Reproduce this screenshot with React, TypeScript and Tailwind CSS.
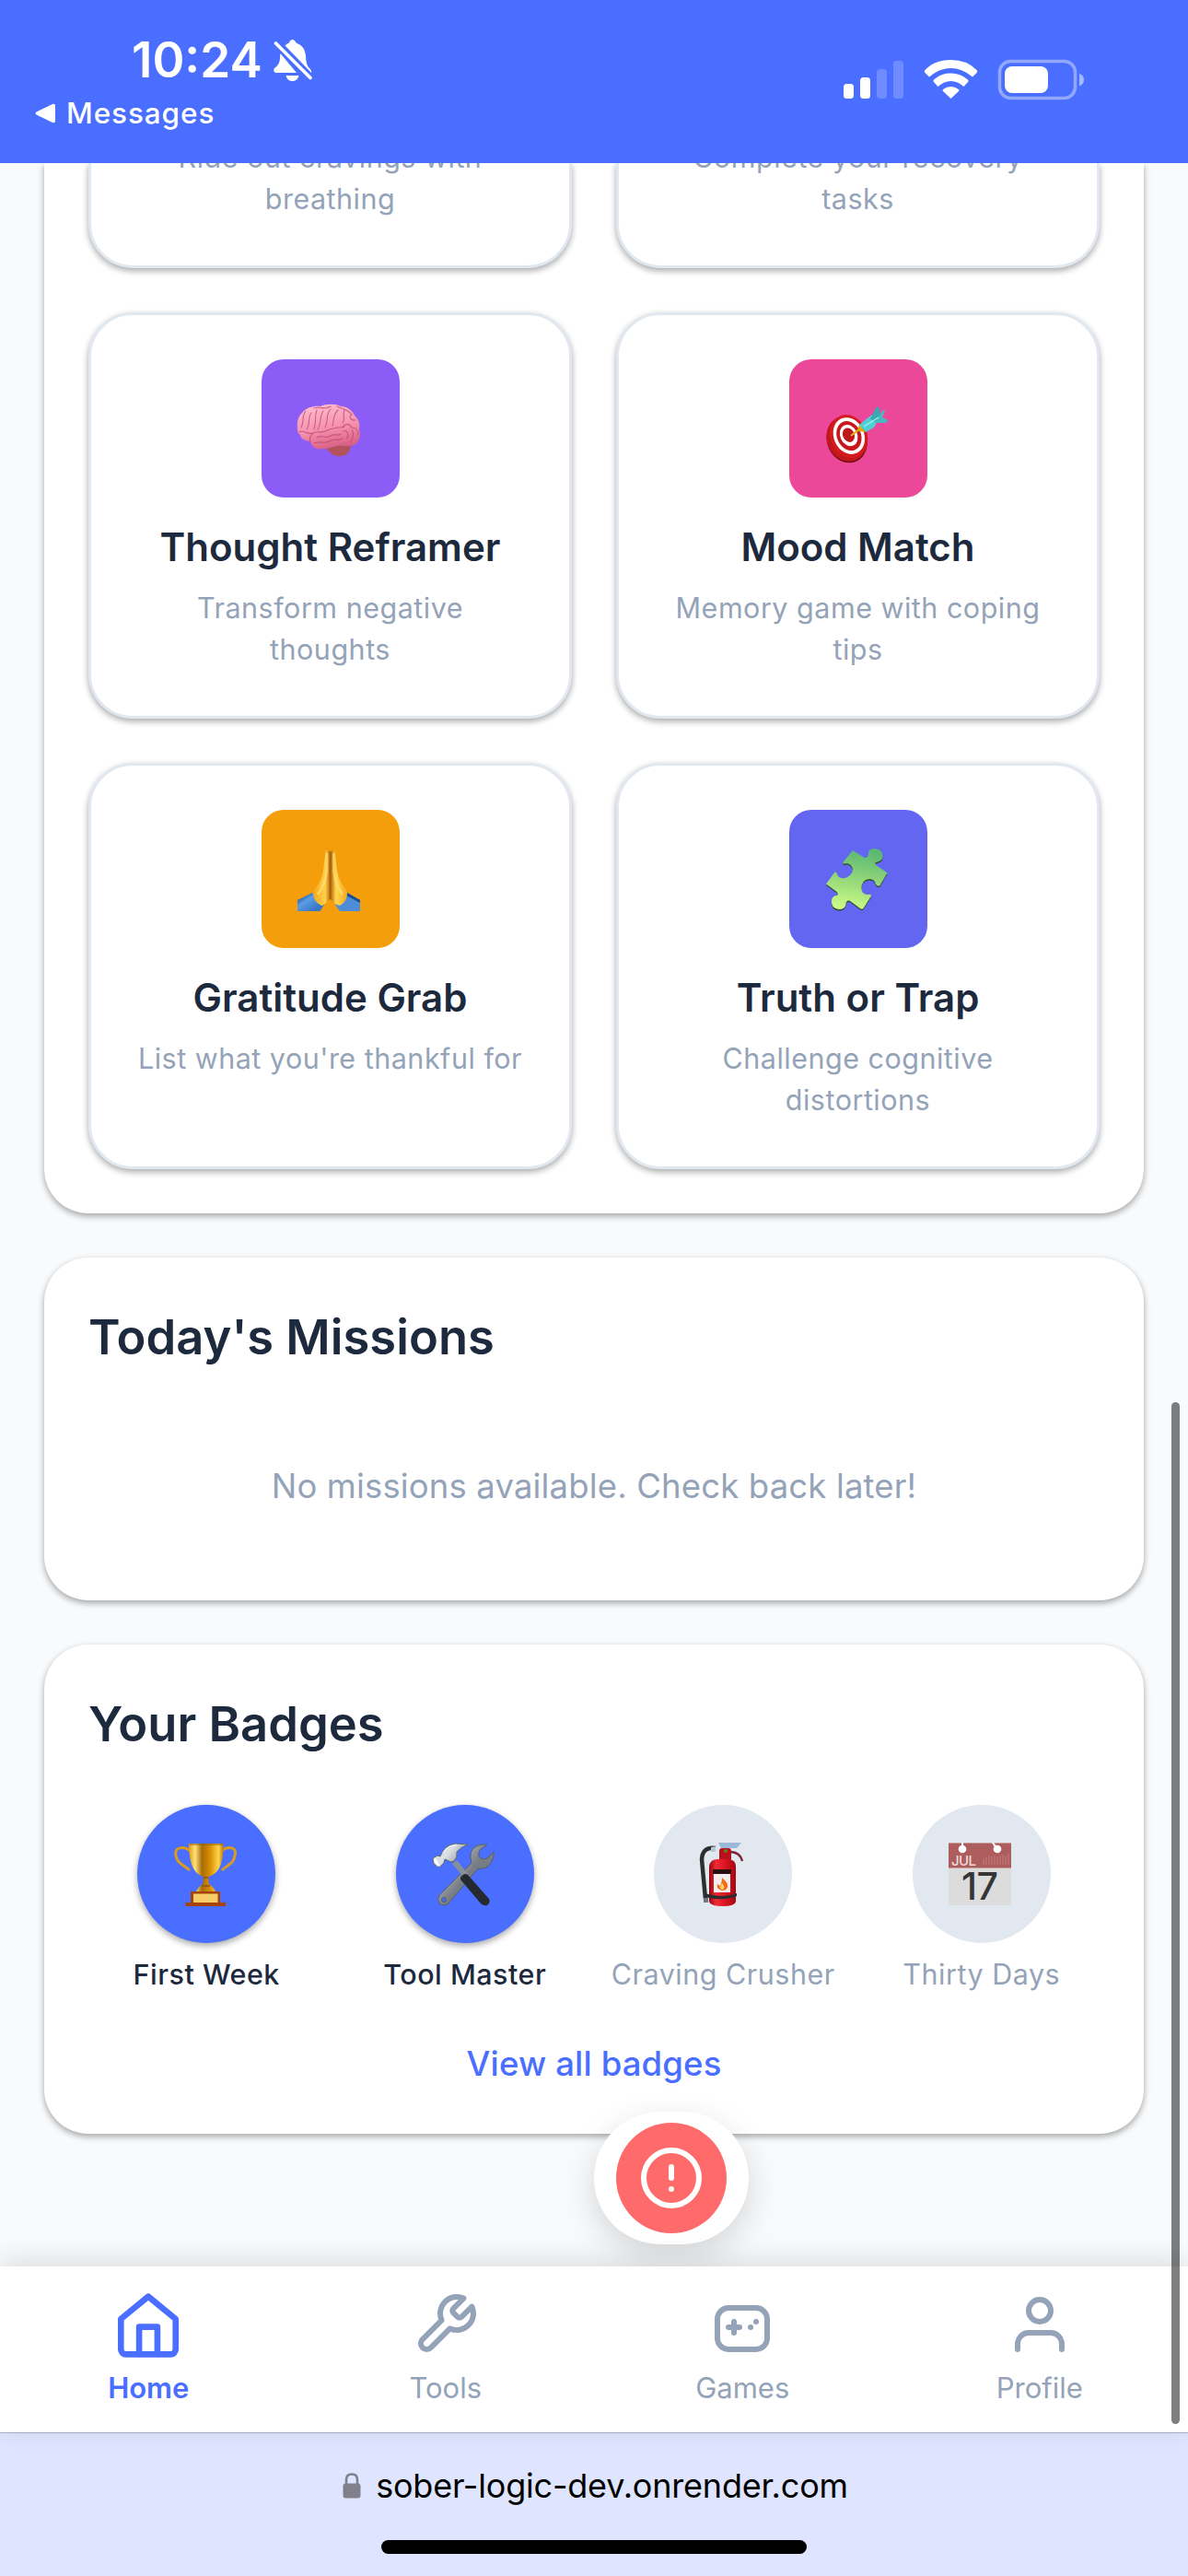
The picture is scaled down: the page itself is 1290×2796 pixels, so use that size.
import type { ReactNode } from "react";

const CARD_SHADOW = "shadow-[0_3px_9px_rgba(0,0,0,0.12),0_3px_6px_rgba(0,0,0,0.24)]";

function Emoji({ children }: { children: ReactNode }) {
  return (
    <svg viewBox="0 0 150 150" className="h-[150px] w-[150px]" fill="none">
      {children}
    </svg>
  );
}

function Brain() {
  return (
    <Emoji>
      <defs>
        <linearGradient id="brain" x1="70" y1="49" x2="80" y2="100" gradientUnits="userSpaceOnUse">
          <stop stopColor="#ffb9cb" />
          <stop offset="0.5" stopColor="#f590ae" />
          <stop offset="1" stopColor="#d3567d" />
        </linearGradient>
      </defs>
      <path d="M70 96C74 102 80 106 86 105C94 105 97 98 97 91Z" fill="#b4525b" />
      <path
        d="M39 76C38 68 40 61 45 57C49 52 58 50 64 51C70 48 81 48 86 51C93 51 99 56 101 61C106 66 107 70 106 76C108 83 106 91 100 93C94 96 86 92 82 94C75 95 72 98 66 97C59 99 54 94 53 89C48 89 42 86 42 82C40 81 39 79 39 76Z"
        fill="url(#brain)"
      />
      <g stroke="#bd4770" strokeWidth="1.1" strokeLinecap="round" opacity="0.75">
        <path d="M53 89C51 82 57 78 63 79C70 80 72 75 78 75C83 73 86 75 90 73" />
        <path d="M48 56C43 62 47 67 43 74M54 58C49 65 54 69 49 76M60 55C57 63 60 67 57 76M67 56C63 62 65 69 61 76M75 54C69 61 73 66 69 74M83 55C77 61 79 65 77 72M90 55C87 63 92 63 88 69" />
        <path d="M57 53C64 50 68 56 75 51M82 51C88 54 94 54 98 60C94 62 97 67 102 66" />
        <path d="M88 74C90 69 96 70 98 74C103 74 105 78 105 82M89 78C93 76 95 81 93 86M98 77C101 79 99 86 97 90" />
        <path d="M60 85C66 81 69 87 75 83C80 80 83 84 86 81M57 91C64 88 70 93 76 88C80 86 84 89 88 86M41 79C46 76 49 82 55 80" />
      </g>
    </Emoji>
  );
}

function Target() {
  return (
    <Emoji>
      <g transform="rotate(-24 63 85)">
        <ellipse cx="61.5" cy="87.5" rx="21.5" ry="25" fill="#6f1010" />
        <ellipse cx="62" cy="86" rx="21.5" ry="25" fill="#c3161c" />
        <ellipse cx="65" cy="84.5" rx="20" ry="24" fill="#d4191f" />
        <ellipse cx="65.5" cy="84" rx="16.5" ry="20.5" fill="#fff" />
        <ellipse cx="65.5" cy="84" rx="13" ry="16.5" fill="#c9151d" />
        <ellipse cx="65.5" cy="83.5" rx="9.3" ry="12" fill="#fff" />
        <ellipse cx="65.5" cy="83" rx="6.2" ry="8" fill="#bd171c" />
      </g>
      <path d="M67 83L77 75" stroke="#e5b719" strokeWidth="2" />
      <path d="M74 78L76 71L83 79Z" fill="#d9aa08" />
      <path d="M76 71L90 60L97 65L92 74L83 79Z" fill="#4fd0d7" />
      <path d="M88 65L94 53Q97 50 98 54L99 62L94 68Z" fill="#38a9b0" />
      <path d="M95 65L102 55L104 56L101 63L107 66Q107 69 103 69L93 69Z" fill="#47b9c2" />
      <path d="M81 73L97 63" stroke="#a5f2ef" strokeWidth="1.2" />
    </Emoji>
  );
}

function Hands() {
  return (
    <Emoji>
      <defs>
        <linearGradient id="skin" x1="56" x2="94" gradientUnits="userSpaceOnUse">
          <stop stopColor="#f5a81b" />
          <stop offset="0.35" stopColor="#ffd04a" />
          <stop offset="0.5" stopColor="#b86506" />
          <stop offset="0.65" stopColor="#ffd651" />
          <stop offset="1" stopColor="#f2a51a" />
        </linearGradient>
        <linearGradient id="sleeve" x1="40" y1="93" x2="52" y2="111" gradientUnits="userSpaceOnUse">
          <stop stopColor="#174f92" />
          <stop offset="0.45" stopColor="#5c9de6" />
          <stop offset="1" stopColor="#3a78c6" />
        </linearGradient>
      </defs>
      <path d="M39 98L55 90L68 103L63.5 110H39Z" fill="url(#sleeve)" />
      <path d="M107 98L93 90L80 103L85 110H107Z" fill="#4d8dd8" />
      <path d="M107 98L93 90L92 93L107 101Z" fill="#174f92" />
      <path
        d="M74.5 45Q70 42 69.5 45L67 66Q65 79 56 88Q55 99 65 104Q69 103 74.5 97Q80 103 85 104Q94 99 93 88Q84 79 82 66L79.5 45Q79 42 74.5 45Z"
        fill="url(#skin)"
      />
      <path d="M74.5 46V97" stroke="#a65d08" strokeWidth="1.4" />
      <path d="M71 47V66Q69 81 61 92M78.5 47V67Q80 81 88 92" stroke="#ffe07a" strokeWidth="2.5" opacity="0.7" />
    </Emoji>
  );
}

const PUZZLE_PATH =
  "M69 44L81 51.5Q85 53 86 49Q85 42 93 42Q102 43 101.500 51Q101 55 96 56.500Q91 57 95 60.500L106.500 68.500L98.500 82Q96.500 84 94 81Q93 75 87 75Q78 76 78.500 86Q79 92 86 92Q89 91 89 93.500L80.500 107Q79 108.500 77 107L65.500 98.500Q62 98 61.500 102Q61 108 54 108Q45 107 46 98Q47 93 52 93Q54 91 51 88.500L40 80.500L49.500 67.500Q51.500 67 52.500 71Q55 75 61 74Q69 71 69 64Q67 57 59 58.500Q57.500 58 60 55Z";

function Puzzle() {
  return (
    <Emoji>
      <defs>
        <linearGradient id="puzzle" x1="78" y1="44" x2="68" y2="108" gradientUnits="userSpaceOnUse">
          <stop stopColor="#5ab873" />
          <stop offset="0.55" stopColor="#99da7b" />
          <stop offset="1" stopColor="#ccfb87" />
        </linearGradient>
      </defs>
      <path d={PUZZLE_PATH} fill="#344b2f" transform="translate(0 1.5)" />
      <path d={PUZZLE_PATH} fill="url(#puzzle)" />
    </Emoji>
  );
}

function Trophy() {
  return (
    <Emoji>
      <defs>
        <linearGradient id="gold" x1="56" x2="94" gradientUnits="userSpaceOnUse">
          <stop stopColor="#e39a08" />
          <stop offset="0.18" stopColor="#ffe27a" />
          <stop offset="0.38" stopColor="#a86c08" />
          <stop offset="0.6" stopColor="#d98d00" />
          <stop offset="0.85" stopColor="#ffd44c" />
          <stop offset="1" stopColor="#b87206" />
        </linearGradient>
      </defs>
      <path
        d="M58 50C50 44 40 46 42 55C43 64 51 65 57 71M91 50C99 44 109 46 106 55C105 64 98 65 92 71"
        stroke="#d99a20"
        strokeWidth="3"
      />
      <path d="M56 42H93.500C94 60 90 75 77 78L78 86Q84 90 85 95H64Q65 90 71 86L72 78C60 75 56 60 56 42Z" fill="url(#gold)" />
      <path d="M72 79H77M70 88H79" stroke="#8e5706" strokeWidth="1.5" />
      <path d="M58 94H90V106H96V110H52.500V106H58Z" fill="#a64309" />
      <rect x="61" y="96.500" width="26.500" height="9.500" fill="#f6cd68" />
      <path d="M57 43H93" stroke="#8a5c05" strokeWidth="1.200" />
    </Emoji>
  );
}

function HammerWrench() {
  return (
    <Emoji>
      <defs>
        <linearGradient id="steel" x1="50" y1="60" x2="75" y2="80" gradientUnits="userSpaceOnUse">
          <stop stopColor="#dbe0e5" />
          <stop offset="0.5" stopColor="#9ba2aa" />
          <stop offset="1" stopColor="#777c85" />
        </linearGradient>
      </defs>
      <path
        d="M99 43Q90 42 84 47Q79 53 82 63L47 98Q44 103 47 107Q52 111 57 107L89 69Q98 71 103 63Q107 57 106 51L100 57Q94 61 90 56Q89 51 92 48Z"
        fill="url(#steel)"
        stroke="#565d69"
        strokeWidth="1"
      />
      <circle cx="52" cy="103" r="2.500" fill="#4a6eff" stroke="#555d68" />
      <path d="M61 64L66 60L78 75L74 79Z" fill="#878f99" />
      <path d="M70 79Q74 73 78 76L101 102Q103 106 99 109Q95 110 92 107L70 81Z" fill="#252a30" />
      <path
        d="M78 43Q70 46 66 51Q67 57 63 61L60 62L53 59L52 63L47 68L41 64L40 58L45 55L48 56Q52 44 64 42Z"
        fill="url(#steel)"
        stroke="#616974"
        strokeWidth="1"
      />
      <path d="M52 52Q56 44 66 44" stroke="#e8ecef" strokeWidth="1.500" />
      <path d="M42 59L46 66" stroke="#fff" strokeWidth="3" />
    </Emoji>
  );
}

function Extinguisher() {
  return (
    <Emoji>
      <defs>
        <linearGradient id="tank" x1="60" x2="90" gradientUnits="userSpaceOnUse">
          <stop stopColor="#95070e" />
          <stop offset="0.25" stopColor="#ef2b37" />
          <stop offset="0.6" stopColor="#d9141e" />
          <stop offset="1" stopColor="#a00510" />
        </linearGradient>
      </defs>
      <path d="M67 47Q53 45 52 59L56 102" stroke="#2b3031" strokeWidth="4.500" />
      <path d="M62 46L67 45V51H62Z" fill="#b8c8d6" />
      <path d="M70 41H95L90 47H73Z" fill="#9ab8d8" />
      <path d="M84 51Q94 52 96 61" stroke="#7a2634" strokeWidth="2.500" />
      <rect x="71" y="47" width="13" height="14" rx="3" fill="#b8111d" />
      <circle cx="78" cy="50" r="2" fill="#4e8c18" />
      <path d="M60 67Q61 59 69 59H82Q89 60 89 67V105Q88 110 75 110Q61 110 60 105Z" fill="url(#tank)" />
      <path d="M64 70H84V75H64Z" fill="#2a1010" />
      <path d="M65 75H83V95H65Z" fill="#f5eeee" />
      <path d="M74 79Q81 85 80 89Q79 93 74 93Q67 91 69 86L72 88Q74 84 74 79Z" fill="#f36c15" />
      <path d="M74 85Q78 89 75 92Q71 91 72 89Z" fill="#ffd36b" />
      <path d="M55 96Q75 102 90 96V99Q75 105 55 100Z" fill="#2c2c2e" />
      <path d="M54 101H59V106H54Z" fill="#6c7881" />
    </Emoji>
  );
}

function Calendar() {
  return (
    <Emoji>
      <rect x="39" y="41" width="68" height="68" fill="#dcdcdc" />
      <rect x="39" y="41.500" width="68" height="27" fill="#ad5d5d" />
      <g fill="#fff">
        <circle cx="54" cy="48" r="4.300" />
        <circle cx="92" cy="48" r="4.300" />
        <path d="M53 41H55V46H53ZM86 41H88L92 46L90 48Z" />
      </g>
      <path d="M77 58V65M80 57V65M83 56V65M86 56V65M89 55V65M92 56V65M95 55V65M98 54V65M101 55V65M104 53V65" stroke="#c98585" strokeWidth="0.800" />
      <text x="42" y="65.500" fontFamily="Inter, sans-serif" fontSize="15" fontWeight="500" fill="#eedada" textLength="27">
        JUL
      </text>
      <text x="53" y="103" fontFamily="Inter, sans-serif" fontSize="41" fontWeight="500" fill="#353535" textLength="40">
        17
      </text>
    </Emoji>
  );
}

type Tool = { title: string; lines: string[]; tile: string; icon: ReactNode };

const tools: Tool[] = [
  { title: "Thought Reframer", lines: ["Transform negative", "thoughts"], tile: "bg-[#8b5cf6]", icon: <Brain /> },
  { title: "Mood Match", lines: ["Memory game with coping", "tips"], tile: "bg-[#ec4899]", icon: <Target /> },
  { title: "Gratitude Grab", lines: ["List what you're thankful for"], tile: "bg-[#f59e0b]", icon: <Hands /> },
  { title: "Truth or Trap", lines: ["Challenge cognitive", "distortions"], tile: "bg-[#6366f1]", icon: <Puzzle /> },
];

function Description({ lines }: { lines: string[] }) {
  return (
    <p className="text-center text-[30.5px] leading-[45px] tracking-[0.5px] text-[#94a3b8]">
      {lines.map((line) => (
        <span key={line} className="block whitespace-nowrap">
          {line}
        </span>
      ))}
    </p>
  );
}

function ToolCard({ title, lines, tile, icon }: Tool) {
  return (
    <article
      className={`flex h-[441px] flex-col items-center rounded-[48px] border-[3px] border-slate-200 bg-white pt-12 ${CARD_SHADOW}`}
    >
      <div className={`h-[150px] w-[150px] shrink-0 rounded-3xl ${tile}`}>{icon}</div>
      <h3 className="mt-6 mb-[14px] text-[42px] leading-[59px] font-semibold whitespace-nowrap text-slate-800">{title}</h3>
      <Description lines={lines} />
    </article>
  );
}

function ClippedCard({ lines }: { lines: string[] }) {
  return (
    <article
      className={`flex h-[114px] flex-col justify-end overflow-hidden rounded-b-[48px] border-x-[3px] border-b-[3px] border-slate-200 bg-white pb-[50px] ${CARD_SHADOW}`}
    >
      <Description lines={lines} />
    </article>
  );
}

const badges = [
  { name: "First Week", earned: true, icon: <Trophy /> },
  { name: "Tool Master", earned: true, icon: <HammerWrench /> },
  { name: "Craving Crusher", earned: false, icon: <Extinguisher /> },
  { name: "Thirty Days", earned: false, icon: <Calendar /> },
];

function StatusBar() {
  return (
    <header className="relative z-10 flex h-[177px] shrink-0 justify-between bg-[#4a6eff] text-white">
      <div className="flex flex-col">
        <div className="mt-[34px] ml-[143px] flex h-[62px] items-center gap-[13px]">
          <span className="w-[141px] text-[53px] leading-[62px] font-semibold whitespace-nowrap">10:24</span>
          <svg viewBox="0 0 42 45" className="h-[45px] w-[42px]" fill="currentColor">
            <path d="M12.500 6.500Q15 4 17 3.500Q18 0 20.500 0Q23 0 24.500 3.500Q34 7 35 17Q35 26 38 30Q42 33 41 36ZM7.500 15L25 36H2Q-1 34 1 31Q7 27 7 20Q7 17 7.500 15ZM13.500 39H27.500Q26 45 20.500 45Q15 45 13.500 39Z" />
            <path d="M2 4L40 42" stroke="#4a6eff" strokeWidth="7" />
            <path d="M2.500 4L40 41.500" stroke="currentColor" strokeWidth="3.600" strokeLinecap="round" />
          </svg>
        </div>
        <div className="ml-[38px] flex h-[54px] items-center gap-[12px]">
          <svg viewBox="0 0 22 22" className="h-[22px] w-[22px]" fill="currentColor">
            <path d="M1.500 9.500L19 1Q22 0 22 3V19Q22 22 19 21L1.500 12.500Q-0.500 11 1.500 9.500Z" />
          </svg>
          <span className="text-[31.5px] leading-[54px] font-medium tracking-[0.9px] whitespace-nowrap">Messages</span>
        </div>
      </div>
      <svg viewBox="0 0 270 60" className="mt-[57px] mr-[107px] h-[60px] w-[270px]" fill="currentColor">
        <rect x="3" y="34" width="11" height="16" rx="3.500" />
        <rect x="21" y="27" width="11" height="23" rx="3.500" />
        <rect x="39" y="18" width="11" height="32" rx="3.500" opacity="0.200" />
        <rect x="57" y="9" width="11" height="41" rx="3.500" opacity="0.200" />
        <path d="M91.500 22Q90 20.500 91.500 19Q102 8 119.500 8Q137 8 147.500 19Q149 20.500 147.500 22L143 26.500Q132 17 119.500 17Q107 17 96 26.500Z" />
        <path d="M101 32Q100 31 101 29.500Q109 22.500 119.500 22.500Q130 22.500 138 29.500Q139 31 138 32L133.500 37Q127 31 119.500 31Q112 31 105.500 37Z" />
        <path d="M111 42Q110 41 111 40Q115 37 119.500 37Q124 37 128 40Q129 41 128 42L119.500 50Z" />
        <rect x="172.500" y="9.500" width="82" height="40" rx="12" fill="none" stroke="currentColor" strokeWidth="3.500" opacity="0.400" />
        <rect x="178" y="15" width="47" height="29" rx="8" />
        <path d="M259 23Q264 24.500 264 29.500Q264 34.500 259 36.500Z" opacity="0.500" />
      </svg>
    </header>
  );
}

const navItems = [
  {
    label: "Home",
    active: true,
    icon: (
      <>
        <path d="M3 10.200L12 2.800L21 10.200V20.200A1.600 1.600 0 0 1 19.400 21.800H4.600A1.600 1.600 0 0 1 3 20.200Z" />
        <path d="M9 21.800V12.800H15V21.800" />
      </>
    ),
  },
  {
    label: "Tools",
    active: false,
    icon: (
      <path d="M14.700 6.300a1 1 0 0 0 0 1.400l1.600 1.600a1 1 0 0 0 1.400 0l3.770-3.770a6 6 0 0 1-7.940 7.940l-6.910 6.910a2.120 2.120 0 0 1-3-3l6.910-6.910a6 6 0 0 1 7.940-7.940l-3.760 3.760z" />
    ),
  },
  {
    label: "Games",
    active: false,
    icon: (
      <>
        <rect x="3" y="6" width="18" height="15" rx="4" />
        <path d="M7 13H11M9 11V15M15 13H15.010M17 11H17.010" />
      </>
    ),
  },
  {
    label: "Profile",
    active: false,
    icon: (
      <>
        <path d="M20 21V19A4 4 0 0 0 16 15H8A4 4 0 0 0 4 19V21" />
        <circle cx="12" cy="7" r="4" />
      </>
    ),
  },
];

function BottomNav() {
  return (
    <nav className="relative z-10 grid h-[180px] shrink-0 grid-cols-4 bg-white shadow-[0_-6px_30px_rgba(0,0,0,0.12)]">
      {navItems.map(({ label, active, icon }) => (
        <div
          key={label}
          className={`flex flex-col items-center pt-[27px] ${active ? "font-semibold text-[#4a6eff]" : "text-[#94a3b8]"}`}
        >
          <svg
            viewBox="0 0 24 24"
            className={`h-[72px] w-[72px] overflow-visible ${active ? "scale-110" : ""}`}
            fill="none"
            stroke="currentColor"
            strokeWidth="2"
            strokeLinecap="round"
            strokeLinejoin="round"
          >
            {icon}
          </svg>
          <span className="mt-[10px] text-[31px] leading-[45px] whitespace-nowrap">{label}</span>
        </div>
      ))}
    </nav>
  );
}

export default function App() {
  return (
    <div className="relative flex h-[2796px] w-[1290px] flex-col overflow-hidden bg-[#f8fafc] font-['Inter',sans-serif] [font-variation-settings:'opsz'_14]">
      <StatusBar />

      <main className="flex h-[2283px] shrink-0 flex-col gap-12 px-12">
        <section className={`grid h-[1140px] grid-cols-2 content-start gap-12 rounded-b-[48px] bg-white px-12 ${CARD_SHADOW}`}>
          <ClippedCard lines={["Ride out cravings with", "breathing"]} />
          <ClippedCard lines={["Complete your recovery", "tasks"]} />
          {tools.map((tool) => (
            <ToolCard key={tool.title} {...tool} />
          ))}
        </section>

        <section className={`h-[372px] rounded-[48px] bg-white px-12 pt-12 ${CARD_SHADOW}`}>
          <h2 className="text-[52.5px] leading-[76px] font-semibold text-slate-800">Today's Missions</h2>
          <p className="mt-[97px] text-center text-[36.5px] leading-[54px] tracking-[0.15px] text-[#94a3b8]">
            No missions available. Check back later!
          </p>
        </section>

        <section className={`h-[531px] rounded-[48px] bg-white px-12 pt-12 ${CARD_SHADOW}`}>
          <h2 className="text-[52.5px] leading-[76px] font-semibold text-slate-800">Your Badges</h2>
          <div className="mt-[50px] grid grid-cols-4 gap-6">
            {badges.map(({ name, earned, icon }) => (
              <div key={name} className="flex flex-col items-center">
                <div
                  className={`h-[150px] w-[150px] rounded-full ${
                    earned ? "bg-[#4a6eff] shadow-[0_3px_9px_rgba(0,0,0,0.12),0_3px_6px_rgba(0,0,0,0.24)]" : "bg-slate-200"
                  }`}
                >
                  {icon}
                </div>
                <span
                  className={`mt-[11px] text-[30.5px] leading-[45px] tracking-[0.5px] whitespace-nowrap ${
                    earned ? "font-medium text-slate-800" : "text-[#94a3b8]"
                  }`}
                >
                  {name}
                </span>
              </div>
            ))}
          </div>
          <p className="mt-[48px] text-center text-[36.5px] leading-[54px] font-medium tracking-[0.15px] text-[#4a6eff]">
            View all badges
          </p>
        </section>
      </main>

      <button
        aria-label="Emergency help"
        className="absolute top-[2292px] left-1/2 flex h-[144px] w-[168px] items-center justify-center rounded-full bg-white shadow-[0_12px_36px_rgba(0,0,0,0.15)]"
      >
        <span className="flex h-[120px] w-[120px] items-center justify-center rounded-full bg-[#ff6b6b]">
          <svg viewBox="0 0 24 24" className="h-[72px] w-[72px]" fill="none" stroke="#fff" strokeWidth="2" strokeLinecap="round">
            <circle cx="12" cy="12" r="10" />
            <path d="M12 8V12M12 16H12.010" />
          </svg>
        </span>
      </button>

      <BottomNav />

      <footer className="flex h-[156px] flex-col items-center border-t border-[#adb2c8] bg-[#dfe4ff]">
        <div className="mt-[30px] ml-[3px] flex h-[54px] items-center gap-[16px]">
          <svg viewBox="0 0 20 28" className="h-[28px] w-[20px]" fill="none">
            <path d="M4 12V7.500Q4 1.500 10 1.500Q16 1.500 16 7.500V12" stroke="#80808c" strokeWidth="2.600" />
            <rect x="0.500" y="11.500" width="19" height="16" rx="3" fill="#80808c" />
          </svg>
          <span className="text-[36px] leading-[54px] tracking-[-0.2px] whitespace-nowrap text-black">
            sober-logic-dev.onrender.com
          </span>
        </div>
        <div className="mt-[32px] h-[15px] w-[462px] rounded-full bg-black" />
      </footer>

      <div className="absolute top-[1522px] left-[1272px] z-20 h-[1109px] w-[9px] rounded-full bg-black/50" />
    </div>
  );
}
